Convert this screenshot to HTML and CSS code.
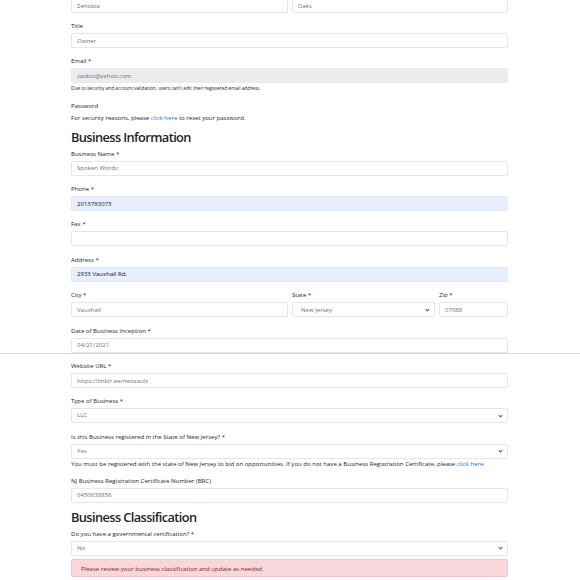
FILE: index.html
```html
<!DOCTYPE html>
<html lang="en">
<head>
<meta charset="UTF-8">
<meta name="viewport" content="width=device-width, initial-scale=1.0">
<title>Business Profile</title>
<link rel="stylesheet" href="styles.css">
</head>
<body>
    <div class="page-break"></div>
    <div class="wrapper">
        <!-- name row (label cut off above) -->
        <div class="row first-row">
            <div class="col"><input class="field" type="text" value="Zenobia"></div>
            <div class="col"><input class="field" type="text" value="Oaks"></div>
        </div>

        <div class="group">
            <label class="lbl">Title</label>
            <input class="field" type="text" value="Owner">
        </div>
        <div class="group">
            <label class="lbl">Email *</label>
            <input class="field disabled" type="text" value="zaobiz@yahoo.com" disabled>
            <div class="help">Due to security and account validation, users can't edit their registered email address.</div>
        </div>
        <div class="group">
            <label class="lbl">Password</label>
            <div class="note">For security reasons, please <a href="#">click here</a> to reset your password.</div>
        </div>

        <h3 class="section">Business Information</h3>
        <div class="group">
            <label class="lbl">Business Name *</label>
            <input class="field" type="text" value="Spoken Wordz">
        </div>
        <div class="group">
            <label class="lbl">Phone *</label>
            <input class="field autofill" type="text" value="2013783073">
        </div>
        <div class="group">
            <label class="lbl">Fax *</label>
            <input class="field" type="text" value="">
        </div>
        <div class="group">
            <label class="lbl">Address *</label>
            <input class="field autofill" type="text" value="2933 Vauxhall Rd,">
        </div>
        <div class="row">
            <div class="group col">
                <label class="lbl">City *</label>
                <input class="field" type="text" value="Vauxhall">
            </div>
            <div class="group col-state">
                <label class="lbl">State *</label>
                <div class="field select state">New Jersey</div>
            </div>
            <div class="group col-zip">
                <label class="lbl">Zip *</label>
                <input class="field" type="text" value="07088">
            </div>
        </div>
        <div class="group">
            <label class="lbl">Date of Business Inception *</label>
            <input class="field" type="text" value="04/21/2021">
        </div>
        <div class="group">
            <label class="lbl">Website URL *</label>
            <input class="field" type="text" value="https://linktr.ee/neosoulz">
        </div>
        <div class="group">
            <label class="lbl">Type of Business *</label>
            <div class="field select">LLC</div>
        </div>
        <div class="group with-note">
            <label class="lbl">Is this Business registered in the State of New Jersey? *</label>
            <div class="field select">Yes</div>
            <div class="note">You must be registered with the state of New Jersey to bid on opportunities. If you do not have a Business Registration Certificate, please <a href="#">click here.</a></div>
        </div>
        <div class="group">
            <label class="lbl">NJ Business Registration Certificate Number (BRC)</label>
            <input class="field" type="text" value="0450638858">
        </div>

        <h3 class="section">Business Classification</h3>
        <div class="group">
            <label class="lbl">Do you have a governmental certification? *</label>
            <div class="field select">No</div>
            <div class="alert">Please review your business classification and update as needed.</div>
        </div>
    </div>
</body>
</html>
```

FILE: styles.css
```css
body{
    margin: 0;
    font-family: "Open Sans", "Noto Sans", sans-serif;
    color: #212529;
    background: #fff;
}

.wrapper{
    width: 437px;
    margin-left: 71px;
}

.page-break{
    position: absolute;
    left: 0;
    top: 353px;
    width: 580px;
    height: 1px;
    background: #d9d9d9;
}

.row{
    display: flex;
    gap: 4px;
}
.first-row{
    margin-top: -2px;
    margin-bottom: 8px;
}
.col{ flex: 1; }
.col-state{ width: 143px; }
.col-zip{ width: 69px; }

.group{
    margin-bottom: 8.4px;
}
.group.with-note{ margin-bottom: 7px; }

.lbl{
    display: block;
    font-size: 6.05px;
    line-height: 10px;
    margin-bottom: 2px;
}

.field{
    display: block;
    box-sizing: border-box;
    width: 100%;
    height: 15px;
    padding: 0 5px;
    border: 1px solid #e3e6ea;
    border-radius: 2px;
    background: #fff;
    font-family: inherit;
    font-size: 6.05px;
    line-height: 13px;
    color: #6c6f73;
    outline: none;
}
.field.disabled{
    background: #e9ecef;
    border-color: #e9ecef;
}
.field.autofill{
    background: #e8f0fe;
    border-color: #e1e8f5;
    color: #111;
}
.select{
    position: relative;
}
.select.state{
    padding-left: 8px;
    line-height: 15px;
}
.select::after{
    content: "";
    position: absolute;
    right: 5px;
    top: 4.5px;
    width: 2px;
    height: 2px;
    border-right: 1px solid #555;
    border-bottom: 1px solid #555;
    transform: rotate(45deg);
}

.help{
    font-size: 4.75px;
    line-height: 7px;
    margin-top: 2px;
}

.note{
    font-size: 6.05px;
    line-height: 10px;
    margin-top: 2px;
}
.group .field + .note{ margin-top: 0; }

a{
    color: #0d6efd;
    text-decoration: none;
}

/* negative top margin collapses with the group's bottom margin */
.section{
    font-size: 12.8px;
    font-weight: 600;
    letter-spacing: -0.6px;
    line-height: 17px;
    margin: -2px 0 2.5px;
}

.alert{
    margin-top: 3px;
    height: 18px;
    box-sizing: border-box;
    padding: 0 9px;
    border: 1px solid #f5c2c7;
    border-radius: 2px;
    background: #f8d7da;
    color: #842029;
    font-size: 6.05px;
    line-height: 18px;
}
```
